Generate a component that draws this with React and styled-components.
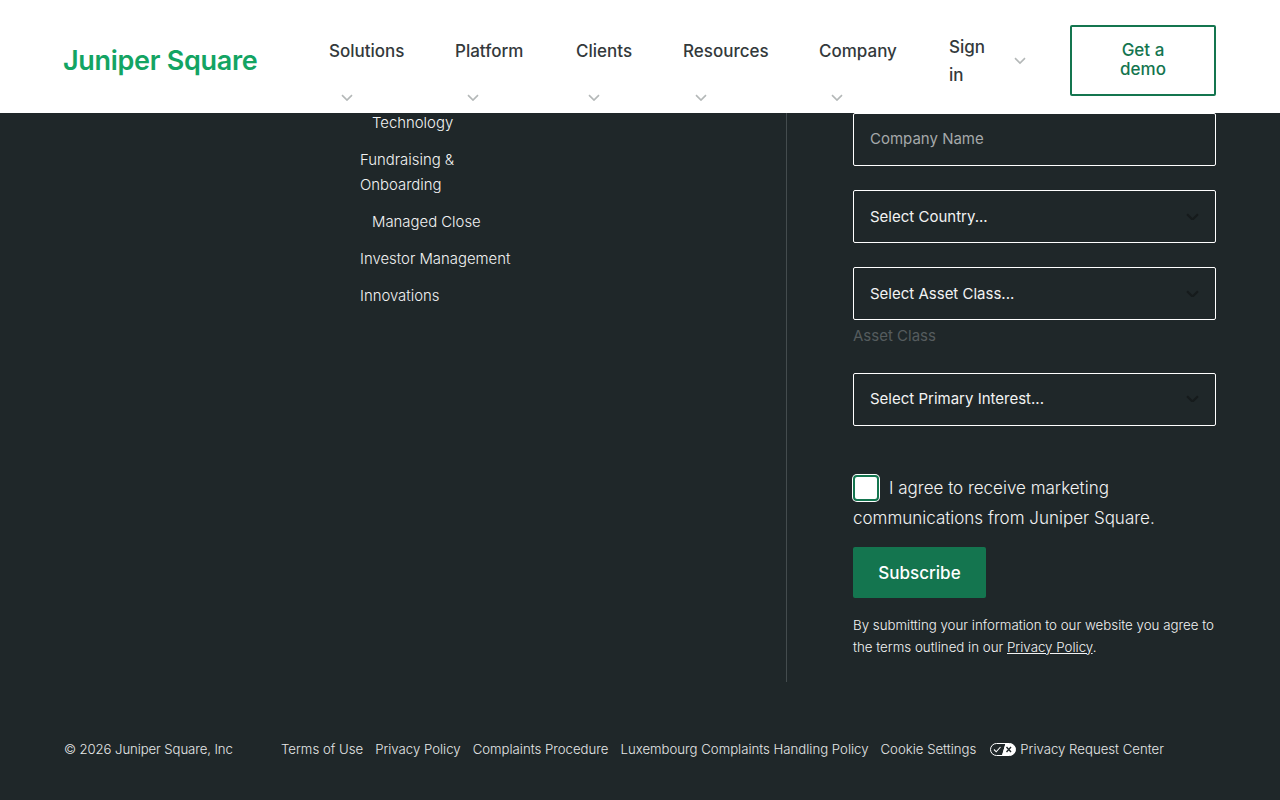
import styled, { createGlobalStyle } from "styled-components";

const GlobalStyle = createGlobalStyle`
  html, body {
    margin: 0;
    padding: 0;
    height: 100%;
    background: #1f2729;
    overflow: hidden;
  }
  * {
    box-sizing: border-box;
  }
`;

const sans = `"Inter", "Liberation Sans", sans-serif`;

const navItems = [
  { label: "Solutions", width: 126 },
  { label: "Platform", width: 121 },
  { label: "Clients", width: 107 },
  { label: "Resources", width: 136 },
  { label: "Company", width: 130 },
];

const sideLinks = [
  { label: "Technology", sub: true },
  { label: "Fundraising & Onboarding" },
  { label: "Managed Close", sub: true },
  { label: "Investor Management" },
  { label: "Innovations" },
];

const footerLinks = [
  "Terms of Use",
  "Privacy Policy",
  "Complaints Procedure",
  "Luxembourg Complaints Handling Policy",
  "Cookie Settings",
];

function Chevron({ color = "#b4b8b8", size = 12, weight = 1.6 }) {
  return (
    <svg width={size} height={size * 0.6} viewBox="0 0 12 7" fill="none">
      <path d="M1 1l5 5 5-5" stroke={color} strokeWidth={weight} />
    </svg>
  );
}

function PrivacyToggle() {
  return (
    <svg width="26" height="13" viewBox="0 0 26 13" fill="none">
      <path d="M6.5.5H16L12.5 12.5H6.5a6 6 0 0 1 0-12z" fill="#1f2729" stroke="#fff" />
      <path d="M16 .5h3.5a6 6 0 0 1 0 12H12.5z" fill="#fff" stroke="#fff" />
      <path d="M4 6.5l2.2 2.3L10.5 4" stroke="#fff" strokeWidth="1.1" />
      <path d="M16.5 4l4.5 5M21 4l-4.5 5" stroke="#1f2729" strokeWidth="1.4" />
    </svg>
  );
}

export default function App() {
  return (
    <>
      <GlobalStyle />
      <Header>
        <Logo>Juniper Square</Logo>
        <Nav>
          {navItems.map((item) => (
            <NavItem key={item.label} $width={item.width}>
              <span>{item.label}</span>
              <NavChevron>
                <Chevron />
              </NavChevron>
            </NavItem>
          ))}
          <SignIn>
            <SignInText>Sign in</SignInText>
            <Chevron />
          </SignIn>
        </Nav>
        <DemoButton>Get a demo</DemoButton>
      </Header>

      <Page>
        <Columns>
          <LinkList>
            {sideLinks.map((link) => (
              <SideLink key={link.label} $sub={link.sub}>
                {link.label}
              </SideLink>
            ))}
          </LinkList>
          <FormColumn>
            <CompanyField>Company Name</CompanyField>
            <Select>
              Select Country...
              <Chevron color="#161b1c" size={13} weight={2} />
            </Select>
            <Select>
              Select Asset Class...
              <Chevron color="#161b1c" size={13} weight={2} />
            </Select>
            <FieldHint>Asset Class</FieldHint>
            <Select $lift>
              Select Primary Interest...
              <Chevron color="#161b1c" size={13} weight={2} />
            </Select>
            <Consent>
              <CheckBox />I agree to receive marketing communications from Juniper Square.
            </Consent>
            <SubscribeButton>Subscribe</SubscribeButton>
            <Legal>
              By submitting your information to our website you agree to the terms outlined in our{" "}
              <u>Privacy Policy</u>.
            </Legal>
          </FormColumn>
        </Columns>
        <Footer>
          <Copyright>© 2026 Juniper Square, Inc</Copyright>
          <FooterLinks>
            {footerLinks.map((link) => (
              <span key={link}>{link}</span>
            ))}
            <PrivacyCenter>
              <PrivacyToggle />
              Privacy Request Center
            </PrivacyCenter>
          </FooterLinks>
        </Footer>
      </Page>
    </>
  );
}

const Header = styled.header`
  position: fixed;
  top: 0;
  left: 0;
  right: 0;
  z-index: 5;
  height: 113px;
  padding: 25px 64px 0;
  background: #fff;
  display: flex;
  align-items: flex-start;
`;

const Logo = styled.div`
  width: 265px;
  margin-top: 19px;
  font-family: "Inter", sans-serif;
  font-size: 27px;
  line-height: 34px;
  font-weight: 600;
  letter-spacing: -0.3px;
  text-indent: -1px;
  color: #13a463;
`;

const Nav = styled.nav`
  width: 741px;
  display: flex;
  align-items: flex-start;
  font-family: ${sans};
  font-size: 17px;
  font-weight: 500;
  color: #33393b;
`;

const NavItem = styled.div`
  width: ${(p) => p.$width}px;
  display: flex;
  flex-direction: column;
  align-items: flex-start;
  line-height: 28px;
  margin-top: 12px;
`;

const NavChevron = styled.div`
  margin: 29px 0 0 12px;
  line-height: 0;
`;

const SignIn = styled.div`
  display: flex;
  align-items: center;
  gap: 25px;
  margin-top: 8px;
`;

const SignInText = styled.div`
  width: 40px;
  line-height: 28px;
`;

const DemoButton = styled.button`
  width: 146px;
  height: 71px;
  padding: 0 40px 2px;
  border: 2px solid #14754f;
  border-radius: 2px;
  background: #fff;
  color: #14754f;
  font-family: ${sans};
  font-size: 17px;
  font-weight: 500;
  line-height: 19px;
`;

const Page = styled.main`
  height: 800px;
  padding: 110px 64px 0;
  display: flex;
  flex-direction: column;
  font-family: ${sans};
  color: #f2f3f3;
`;

const Columns = styled.div`
  height: 572px;
  padding-left: 296px;
  display: flex;
`;

const LinkList = styled.div`
  width: 427px;
  padding-top: 1px;
  border-right: 1px solid #444c4e;
  display: flex;
  flex-direction: column;
  gap: 12px;
`;

const SideLink = styled.div`
  width: 170px;
  padding-left: ${(p) => (p.$sub ? "12px" : "0")};
  font-size: 14.9px;
  font-weight: 300;
  line-height: 25px;
`;

const FormColumn = styled.div`
  width: 363px;
  margin-left: 66px;
  padding-top: 3px;
`;

const Field = styled.div`
  height: 53px;
  padding: 0 16px;
  border: 1px solid #fff;
  border-radius: 2px;
  display: flex;
  align-items: center;
  justify-content: space-between;
  font-size: 15px;
  color: #f2f3f3;
`;

const CompanyField = styled(Field)`
  padding-bottom: 2px;
  color: #a5a9aa;
`;

const Select = styled(Field)`
  margin-top: 24px;
  padding-bottom: ${(p) => (p.$lift ? "2px" : "0")};
`;

const FieldHint = styled.div`
  margin-top: 3px;
  height: 26px;
  font-size: 15px;
  line-height: 25px;
  color: #555c5e;
`;

const Consent = styled.div`
  margin-top: 47px;
  font-size: 17px;
  font-weight: 300;
  line-height: 30px;
`;

const CheckBox = styled.span`
  display: inline-block;
  width: 26px;
  height: 26px;
  margin-right: 10px;
  vertical-align: -7px;
  background: #fff;
  border: 2px solid #14754f;
  border-radius: 4px;
  box-shadow: 0 0 0 1px #fff;
`;

const SubscribeButton = styled.button`
  display: block;
  width: 133px;
  height: 51px;
  margin-top: 14px;
  border: 0;
  border-radius: 2px;
  background: #14754f;
  color: #fff;
  font-family: ${sans};
  font-size: 17px;
  font-weight: 500;
`;

const Legal = styled.p`
  margin: 16px 0 0;
  font-size: 13.3px;
  font-weight: 300;
  line-height: 22px;
`;

const Footer = styled.footer`
  margin-top: 57px;
  display: flex;
  align-items: center;
  font-size: 13.2px;
  font-weight: 300;
  line-height: 20px;
  color: #e6e8e8;
`;

const Copyright = styled.div`
  width: 217px;
  letter-spacing: -0.1px;
`;

const FooterLinks = styled.div`
  display: flex;
  align-items: center;
  gap: 12px;
`;

const PrivacyCenter = styled.span`
  margin-left: 2px;
  display: flex;
  align-items: center;
  gap: 4px;
`;
